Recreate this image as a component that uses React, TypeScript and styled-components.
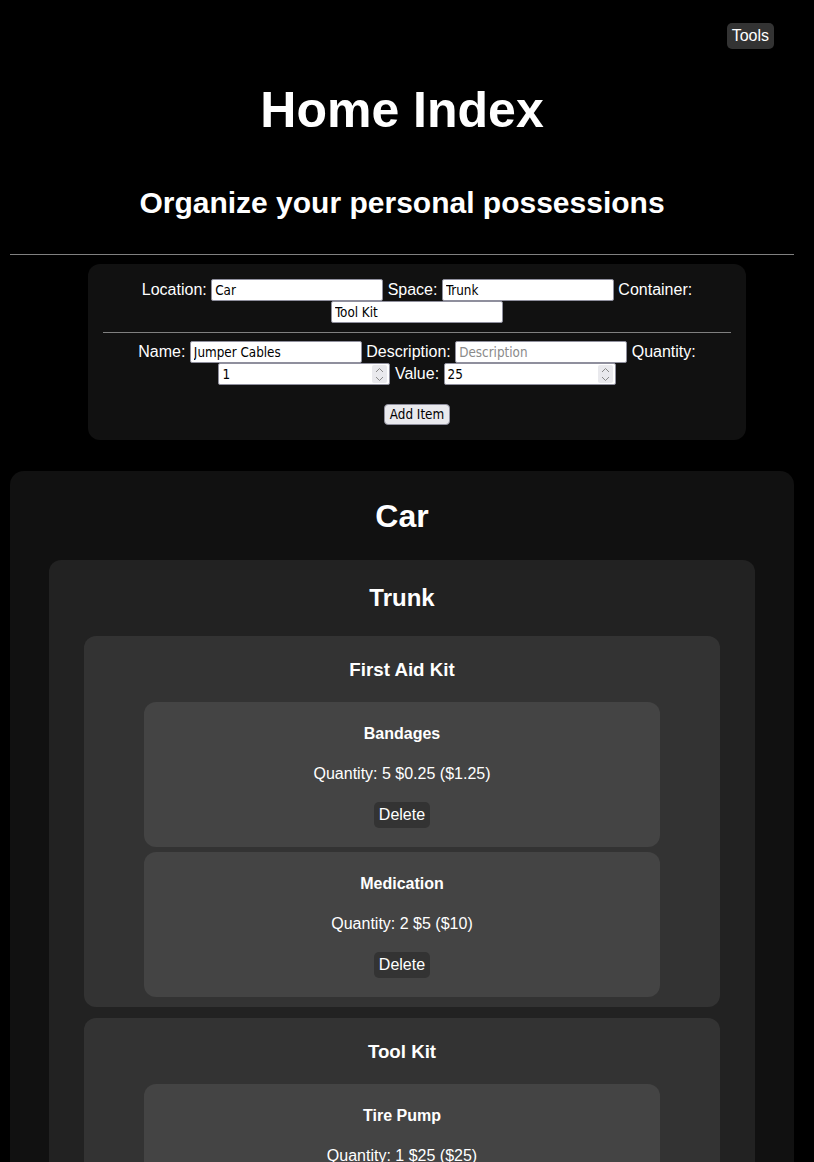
import { FC, useState } from 'react';
import styled, { createGlobalStyle } from 'styled-components';

interface Item {
	name: string;
	quantity: number;
	value: number;
}

interface Container {
	name: string;
	items: Item[];
}

interface Space {
	name: string;
	containers: Container[];
}

interface Location {
	name: string;
	spaces: Space[];
}

const inventory: Location[] = [
	{
		name: 'Car',
		spaces: [
			{
				name: 'Trunk',
				containers: [
					{
						name: 'First Aid Kit',
						items: [
							{ name: 'Bandages', quantity: 5, value: 0.25 },
							{ name: 'Medication', quantity: 2, value: 5 },
						],
					},
					{
						name: 'Tool Kit',
						items: [{ name: 'Tire Pump', quantity: 1, value: 25 }],
					},
				],
			},
		],
	},
];

const GlobalStyle = createGlobalStyle`
	body {
		margin: 0;
		background: #000;
		color: #fff;
		font-family: "Liberation Sans", Arial, sans-serif;
	}
`;

const controlFont = `"DejaVu Sans Condensed", "DejaVu Sans", sans-serif`;

const ItemCard: FC<{ item: Item; onDelete: () => void }> = ({ item, onDelete }) => (
	<ItemBox>
		<ItemTitle>{item.name}</ItemTitle>
		<ItemDetails>
			Quantity: {item.quantity} ${item.value} (${item.quantity * item.value})
		</ItemDetails>
		<DarkButton onClick={onDelete}>Delete</DarkButton>
	</ItemBox>
);

const NumberField: FC<{ value: string; onChange: (v: string) => void }> = ({ value, onChange }) => {
	const step = (d: number) => onChange(String((Number(value) || 0) + d));
	return (
		<NumberWrap>
			<TextInput type="number" value={value} onChange={(e) => onChange(e.target.value)} />
			<Spinner>
				<SpinHalf onClick={() => step(1)}>
					<svg width="9" height="6" viewBox="0 0 9 6">
						<path d="M1 5 L4.5 1.5 L8 5" fill="none" stroke="#8a8a8a" strokeWidth="1" />
					</svg>
				</SpinHalf>
				<SpinHalf onClick={() => step(-1)}>
					<svg width="9" height="6" viewBox="0 0 9 6">
						<path d="M1 1 L4.5 4.5 L8 1" fill="none" stroke="#8a8a8a" strokeWidth="1" />
					</svg>
				</SpinHalf>
			</Spinner>
		</NumberWrap>
	);
};

const App: FC = () => {
	const [data, setData] = useState(inventory);
	const [form, setForm] = useState({
		location: 'Car',
		space: 'Trunk',
		container: 'Tool Kit',
		name: 'Jumper Cables',
		description: '',
		quantity: '1',
		value: '25',
	});

	const set = (key: keyof typeof form) => (v: string) => setForm({ ...form, [key]: v });
	const update = (key: keyof typeof form) => (e: React.ChangeEvent<HTMLInputElement>) =>
		set(key)(e.target.value);

	const removeItem = (l: number, s: number, c: number, i: number) => {
		const next = structuredClone(data);
		next[l].spaces[s].containers[c].items.splice(i, 1);
		setData(next);
	};

	return (
		<Page>
			<GlobalStyle />
			<ToolsBar>
				<DarkButton>Tools</DarkButton>
			</ToolsBar>
			<Title>Home Index</Title>
			<Subtitle>Organize your personal possessions</Subtitle>
			<Divider />

			<FormCard>
				<FormRow>
					Location: <TextInput value={form.location} onChange={update('location')} /> Space:{' '}
					<TextInput value={form.space} onChange={update('space')} /> Container:{' '}
					<TextInput value={form.container} onChange={update('container')} />
				</FormRow>
				<FormDivider />
				<FormRow>
					Name: <TextInput value={form.name} onChange={update('name')} /> Description:{' '}
					<TextInput
						placeholder="Description"
						value={form.description}
						onChange={update('description')}
					/>{' '}
					Quantity: <NumberField value={form.quantity} onChange={set('quantity')} /> Value:{' '}
					<NumberField value={form.value} onChange={set('value')} />
				</FormRow>
				<ButtonRow>
					<AddButton>Add Item</AddButton>
				</ButtonRow>
			</FormCard>

			{data.map((location, l) => (
				<LocationCard key={location.name}>
					<LocationTitle>{location.name}</LocationTitle>
					{location.spaces.map((space, s) => (
						<SpaceCard key={space.name}>
							<SpaceTitle>{space.name}</SpaceTitle>
							<ContainerList>
								{space.containers.map((container, c) => (
									<ContainerCard key={container.name}>
										<ContainerTitle>{container.name}</ContainerTitle>
										{container.items.map((item, i) => (
											<ItemCard
												key={item.name}
												item={item}
												onDelete={() => removeItem(l, s, c, i)}
											/>
										))}
									</ContainerCard>
								))}
							</ContainerList>
						</SpaceCard>
					))}
				</LocationCard>
			))}
		</Page>
	);
};

const Page = styled.div`
	padding: 0 20px 20px 10px;
`;

const ToolsBar = styled.div`
	display: flex;
	justify-content: flex-end;
	padding: 23px 20px 0 0;
`;

const DarkButton = styled.button`
	background: #333;
	color: #fff;
	border: none;
	border-radius: 5px;
	padding: 4px 5px;
	font-family: "Liberation Sans", Arial, sans-serif;
	font-size: 16px;
	line-height: 18px;
	cursor: pointer;
`;

const Title = styled.h1`
	font-size: 50px;
	line-height: 57px;
	text-align: center;
	margin: 33px 0 0;
`;

const Subtitle = styled.h2`
	font-size: 30px;
	line-height: 34px;
	text-align: center;
	margin: 47px 0 0;
`;

const Divider = styled.hr`
	border: none;
	border-top: 1px solid #808080;
	margin: 34px 0 9px;
`;

const FormCard = styled.div`
	box-sizing: border-box;
	width: 658px;
	margin: 0 0 0 78px;
	padding: 15px 15px 15px;
	background: #111;
	border-radius: 12px;
	text-align: center;
`;

const FormRow = styled.div`
	font-size: 16px;
	line-height: 22px;
`;

const TextInput = styled.input`
	box-sizing: border-box;
	width: 172px;
	height: 22px;
	margin: 0;
	padding: 1px 3px;
	border: 1px solid #8f8f9d;
	border-radius: 2px;
	background: #fff;
	color: #000;
	font-family: ${controlFont};
	font-size: 13.33px;
	vertical-align: bottom;

	&::placeholder {
		color: #8a8a8a;
	}

	&[type='number'] {
		-moz-appearance: textfield;
		padding-right: 20px;
	}

	&::-webkit-inner-spin-button,
	&::-webkit-outer-spin-button {
		-webkit-appearance: none;
		margin: 0;
	}
`;

const NumberWrap = styled.span`
	position: relative;
	display: inline-block;
	vertical-align: bottom;
`;

const Spinner = styled.span`
	position: absolute;
	top: 2px;
	right: 3px;
	bottom: 2px;
	width: 15px;
	display: flex;
	flex-direction: column;
	background: #e9e9ed;
	border-radius: 2px;
`;

const SpinHalf = styled.span`
	flex: 1;
	display: flex;
	align-items: center;
	justify-content: center;
	cursor: default;
`;

const FormDivider = styled.hr`
	border: none;
	border-top: 1px solid #808080;
	margin: 9px 0 8px;
`;

const ButtonRow = styled.div`
	margin-top: 19px;
	line-height: 0;
`;

const AddButton = styled.button`
	box-sizing: border-box;
	height: 21px;
	padding: 0 5px;
	border: 1px solid #8f8f9d;
	border-radius: 4px;
	background: #e9e9ed;
	color: #000;
	font-family: ${controlFont};
	font-size: 13.33px;
	line-height: 19px;
`;

const LocationCard = styled.section`
	display: flex;
	flex-direction: column;
	align-items: center;
	margin-top: 31px;
	padding: 27px 0 20px;
	background: #111;
	border-radius: 14px;
`;

const LocationTitle = styled.h1`
	font-size: 32px;
	line-height: 37px;
	margin: 0 0 25px;
`;

const SpaceCard = styled.div`
	display: flex;
	flex-direction: column;
	align-items: center;
	width: 90%;
	padding: 24px 0 10px;
	background: #222;
	border-radius: 12px;
`;

const SpaceTitle = styled.h2`
	font-size: 24px;
	line-height: 28px;
	margin: 0 0 24px;
`;

const ContainerList = styled.div`
	display: flex;
	flex-direction: column;
	align-items: center;
	gap: 11px;
	width: 100%;
`;

const ContainerCard = styled.div`
	display: flex;
	flex-direction: column;
	align-items: center;
	gap: 5px;
	width: 90%;
	padding: 23px 0 10px;
	background: #333;
	border-radius: 12px;
`;

const ContainerTitle = styled.h3`
	font-size: 18.72px;
	line-height: 22px;
	margin: 0 0 16px;
`;

const ItemBox = styled.div`
	display: flex;
	flex-direction: column;
	align-items: center;
	width: 81.3%;
	padding: 23px 0 19px;
	background: #444;
	border-radius: 12px;
`;

const ItemTitle = styled.h4`
	font-size: 16px;
	line-height: 18px;
	margin: 0 0 22px;
`;

const ItemDetails = styled.p`
	font-size: 16px;
	line-height: 18px;
	margin: 0 0 19px;
`;

export default App;
